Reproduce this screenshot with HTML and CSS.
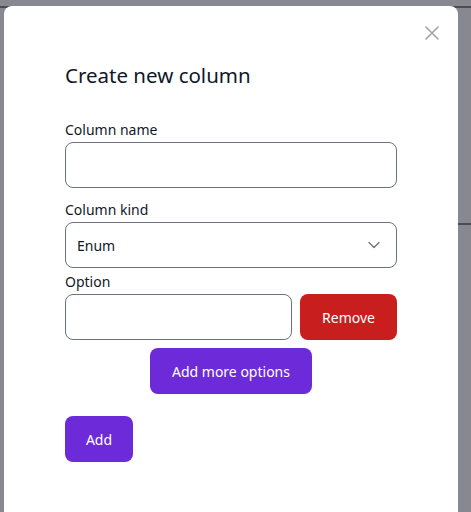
FILE: index.html
```html
<!DOCTYPE html>
<html lang="en">
<head>
<meta charset="utf-8">
<link rel="stylesheet" href="styles.css">
<title>Create new column</title>
</head>
<body>
<div class="backdrop">
  <div class="modal">
    <button class="close" aria-label="Close">
      <svg width="14" height="14" viewBox="0 0 14 14"><path d="M1 1L13 13M13 1L1 13" stroke="#9ca3af" stroke-width="1.6" stroke-linecap="round"/></svg>
    </button>
    <h2 class="title">Create new column</h2>
    <div class="field field-name">
      <label class="label">Column name</label>
      <input class="input" type="text">
    </div>
    <div class="field field-kind">
      <label class="label">Column kind</label>
      <div class="select">
        <span>Enum</span>
        <svg width="12" height="8" viewBox="0 0 12 8"><path d="M1 1.5L6 6.5L11 1.5" fill="none" stroke="#6b7280" stroke-width="1.4" stroke-linecap="round" stroke-linejoin="round"/></svg>
      </div>
    </div>
    <div class="field field-option">
      <label class="label">Option</label>
      <div class="option-row">
        <input class="input" type="text">
        <button class="btn btn-red">Remove</button>
      </div>
    </div>
    <div class="center-row">
      <button class="btn btn-purple btn-more">Add more options</button>
    </div>
    <button class="btn btn-purple btn-add">Add</button>
  </div>
</div>
</body>
</html>
```
FILE: styles.css
```css
* { box-sizing: border-box; }
html, body { margin: 0; padding: 0; }
body {
  width: 471px;
  height: 512px;
  overflow: hidden;
  font-family: "Noto Sans", "Open Sans", sans-serif;
  color: #111827;
  background:
    linear-gradient(#4b4d56, #4b4d56) 0 6px / 100% 2px no-repeat,
    linear-gradient(#4b4d56, #4b4d56) right 0 top 223px / 20px 2px no-repeat,
    #878890;
}
.backdrop {
  padding: 6px 13px 0 4px;
}
.modal {
  position: relative;
  background: #fff;
  border-radius: 8px 8px 0 0;
  height: 520px;
  padding: 55px 61px 0 61px;
}
.close {
  position: absolute;
  top: 20px;
  right: 19px;
  width: 14px;
  height: 14px;
  padding: 0;
  border: 0;
  background: none;
  display: flex;
}
.title {
  margin: 0;
  font-size: 20.5px;
  line-height: 28px;
  font-weight: 400;
}
.field { display: flex; flex-direction: column; }
.field-name { margin-top: 31px; margin-bottom: 12px; }
.field-kind { margin-bottom: 4px; }
.label {
  font-size: 14px;
  line-height: 20px;
  margin-bottom: 2px;
}
.input, .select {
  height: 46px;
  border: 1px solid #6b7280;
  border-radius: 8px;
  background: #fff;
  font: inherit;
}
.select {
  display: flex;
  align-items: center;
  justify-content: space-between;
  padding: 0 16px 0 11px;
  font-size: 14px;
}
.option-row {
  display: flex;
  gap: 8px;
}
.option-row .input { flex: 1; min-width: 0; }
.btn {
  border: 0;
  border-radius: 8px;
  color: #fff;
  font-family: inherit;
  font-size: 14px;
  height: 46px;
}
.btn-red { background: #c81e1e; width: 97px; }
.btn-purple { background: #6d2ad9; }
.center-row {
  display: flex;
  justify-content: center;
  margin-top: 8px;
}
.btn-more { width: 162px; }
.btn-add { margin-top: 22px; width: 68px; }
```
